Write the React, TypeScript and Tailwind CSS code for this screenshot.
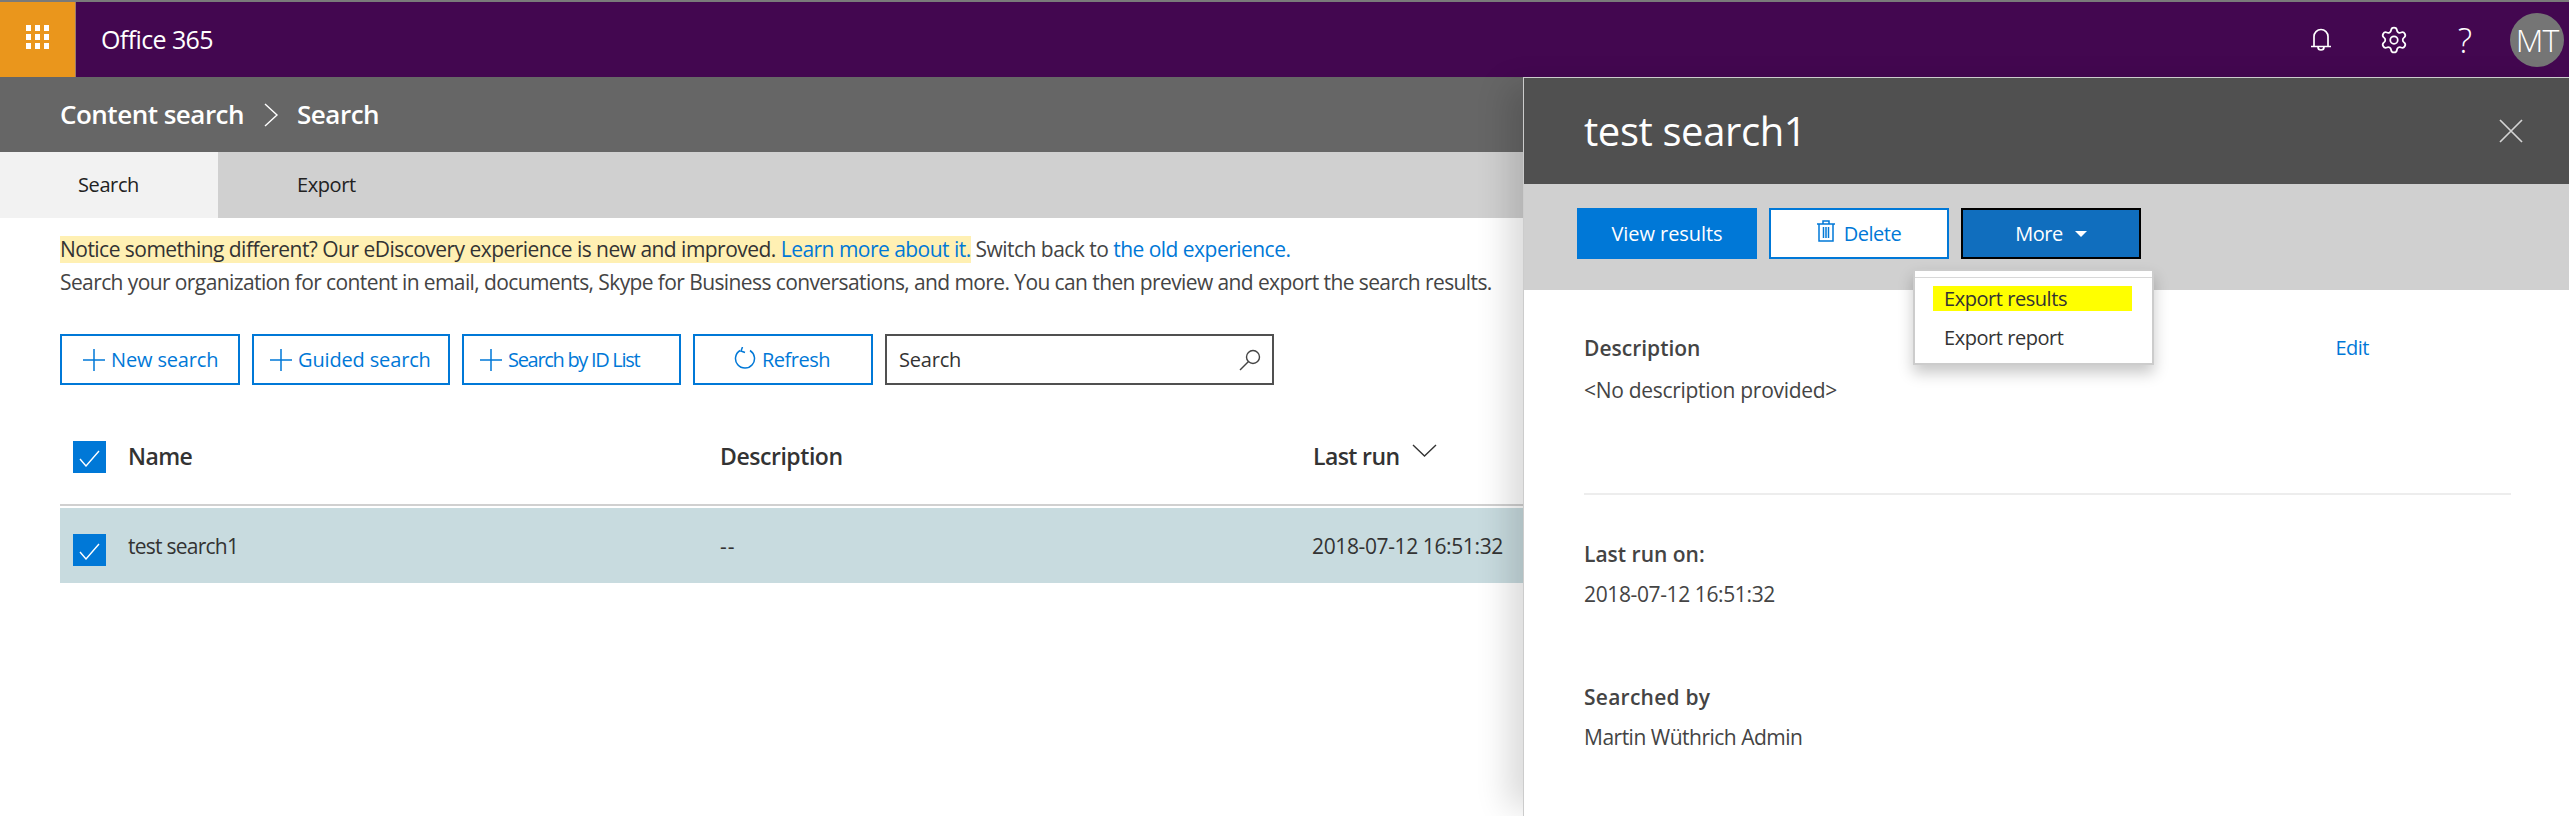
import React from 'react';
import { Settings } from 'lucide-react';

const font = "font-['Open_Sans','Noto_Sans',sans-serif]";

const Plus = () => (
  <svg width="22" height="22" viewBox="0 0 22 22" className="shrink-0">
    <path d="M11 0v22M0 11h22" stroke="#0078d7" strokeWidth="1.5" fill="none" />
  </svg>
);

const Check = () => (
  <div className="w-[33px] h-[32px] bg-[#0078d7] flex items-center justify-center shrink-0">
    <svg width="21" height="17" viewBox="0 0 21 17" className="mt-[3px]">
      <path d="M1 9l6 7L20 1" stroke="#fff" strokeWidth="1.4" fill="none" />
    </svg>
  </div>
);

const ToolButton = ({ width, icon, label, pad, text }: { width: string; icon: React.ReactNode; label: string; pad: string; text: string }) => (
  <button className={`${width} ${pad} h-[51px] border-2 border-[#0078d7] bg-white flex items-center text-[#0078d7] gap-[6px] whitespace-nowrap`}>
    {icon}
    <span className={text}>{label}</span>
  </button>
);

export default function App() {
  return (
    <div className={`${font} relative w-[2569px] h-[816px] overflow-hidden bg-white text-[#333]`}>
      <div className="h-[77px] bg-[#430750] border-t-2 border-[#7a7a7a] flex items-center text-white">
        <div className="w-[76px] h-full bg-[#ea961c] border-r border-[#9a7a70] flex items-center justify-center">
          <svg width="23" height="24" viewBox="0 0 23 24" fill="#fff" className="-mt-[5px]">
            <rect x="0" y="0" width="5" height="6" /><rect x="9" y="0" width="5" height="6" /><rect x="18" y="0" width="5" height="6" />
            <rect x="0" y="9" width="5" height="6" /><rect x="9" y="9" width="5" height="6" /><rect x="18" y="9" width="5" height="6" />
            <rect x="0" y="18" width="5" height="6" /><rect x="9" y="18" width="5" height="6" /><rect x="18" y="18" width="5" height="6" />
          </svg>
        </div>
        <div className="ml-[25px] text-[25px] tracking-[-0.6px]">Office 365</div>
        <div className="ml-auto flex items-center">
          <svg width="22" height="25" viewBox="0 0 22 25" fill="none" stroke="#fff" strokeWidth="1.7">
            <path d="M4 19V9.5a7 7 0 0 1 14 0V19M1 19.5h20M8 20a3 3 0 0 0 6 0" />
          </svg>
          <Settings size={30} strokeWidth={1.4} className="ml-[47px]" />
          <div className="ml-[45px] w-[22px] text-center text-[34px] font-light leading-none">?</div>
          <div className="ml-[34px] mr-[5px] w-[54px] h-[54px] rounded-full bg-[#757575] flex items-center justify-center text-[32px] font-light tracking-[-1px]">MT</div>
        </div>
      </div>

      <div className="h-[75px] bg-[#666666] pl-[60px] flex items-center text-white text-[26px] font-semibold tracking-[-0.5px]">
        <span>Content search</span>
        <svg width="16" height="24" viewBox="0 0 16 24" className="ml-[19px] mr-[18px]">
          <path d="M2 1l12 11L2 23" stroke="#fff" strokeWidth="1.4" fill="none" />
        </svg>
        <span>Search</span>
      </div>

      <div className="h-[66px] bg-[#d0d0d0] flex text-[20px] tracking-[-0.4px] text-[#222]">
        <div className="w-[218px] bg-[#f2f2f2] pl-[78px] flex items-center">Search</div>
        <div className="pl-[79px] flex items-center">Export</div>
      </div>

      <div className="pl-[60px] pt-[18px] w-[1523px]">
        <div className="h-[27px] leading-[27px] text-[21px] tracking-[-0.53px] text-[#444] whitespace-nowrap">
          <span className="inline-block bg-[#fff0b3]">
            <span className="text-[#333]">Notice something different? Our eDiscovery experience is new and improved. </span>
            <span className="text-[#0078d7]">Learn more about it.</span>
          </span>
          <span> Switch back to </span>
          <span className="text-[#0078d7]">the old experience.</span>
        </div>
        <div className="mt-[6px] h-[27px] leading-[27px] text-[21px] tracking-[-0.6px] text-[#444] whitespace-nowrap">
          Search your organization for content in email, documents, Skype for Business conversations, and more. You can then preview and export the search results.
        </div>

        <div className="mt-[38px] flex gap-[12px]">
          <ToolButton width="w-[180px]" pad="pl-[21px]" text="text-[20px] tracking-[-0.15px]" icon={<Plus />} label="New search" />
          <ToolButton width="w-[198px]" pad="pl-[16px]" text="text-[20px] tracking-[-0.15px]" icon={<Plus />} label="Guided search" />
          <ToolButton width="w-[219px]" pad="pl-[16px]" text="text-[20px] tracking-[-1.3px]" icon={<Plus />} label="Search by ID List" />
          <ToolButton
            width="w-[180px]"
            pad="pl-[39px]"
            text="text-[20px] tracking-[-0.5px]"
            label="Refresh"
            icon={
              <svg width="22" height="23" viewBox="0 0 22 23" fill="none" stroke="#0078d7" strokeWidth="1.5" className="shrink-0 -mt-[2px]">
                <path d="M6 3.5A9.5 9.5 0 1 0 16 3.5M8.5 0L7 4l4 1.5" />
              </svg>
            }
          />
          <div className="w-[389px] h-[51px] border-2 border-[#505050] flex items-center justify-between pl-[12px] pr-[11px] text-[20px] tracking-[-0.2px] text-[#333]">
            <span>Search</span>
            <svg width="22" height="22" viewBox="0 0 22 22" fill="none" stroke="#444" strokeWidth="1.4">
              <circle cx="14" cy="8" r="6.5" />
              <path d="M9.5 12.5L1 21" />
            </svg>
          </div>
        </div>

        <div className="mt-[23px] h-[96px] flex items-center pl-[13px] text-[23px] font-semibold tracking-[-0.6px] text-[#333]">
          <div className="mt-[2px]"><Check /></div>
          <div className="ml-[22px] w-[592px]">Name</div>
          <div className="w-[593px] tracking-[-0.45px]">Description</div>
          <div className="flex items-start">
            Last run
            <svg width="25" height="13" viewBox="0 0 25 13" className="ml-[13px] mt-[5px]">
              <path d="M1 1l11.5 11L24 1" stroke="#333" strokeWidth="1.4" fill="none" />
            </svg>
          </div>
        </div>
        <div className="h-[2px] bg-[#d0d0d0]" />
        <div className="mt-[2px] h-[75px] bg-[#c8dbdf] flex items-center pl-[13px] text-[21px] text-[#333]">
          <div className="mt-[9px]"><Check /></div>
          <div className="ml-[22px] w-[592px] mt-[3px] tracking-[-0.75px]">test search1</div>
          <div className="w-[593px] mt-[3px] tracking-[1px]">--</div>
          <div className="mt-[3px] -ml-[1px] tracking-[-0.38px] whitespace-nowrap">2018-07-12 16:51:32</div>
        </div>
      </div>

      {/* details panel slides over the page */}
      <div className="absolute left-[1523px] top-[77px] w-[1046px] h-[739px] bg-white border-l border-t border-[#cccccc] shadow-[-24px_0_30px_-8px_rgba(0,0,0,0.14)]">
        <div className="h-[106px] bg-[#505050] pl-[60px] pr-[46px] flex items-center justify-between text-white">
          <div className="text-[40px] tracking-[-0.4px]">test search1</div>
          <svg width="24" height="24" viewBox="0 0 24 24" stroke="#d4d4d4" strokeWidth="1.7">
            <path d="M1 1l22 22M23 1L1 23" />
          </svg>
        </div>
        <div className="h-[106px] bg-[#d0d0d0] pl-[53px] pt-[24px] flex gap-[12px] text-[20px] tracking-[-0.5px]">
          <button className="w-[180px] h-[51px] bg-[#0078d7] text-white tracking-[-0.05px]">View results</button>
          <button className="w-[180px] h-[51px] bg-white border-2 border-[#0078d7] text-[#0078d7] flex items-center justify-center gap-[9px]">
            <svg width="18" height="22" viewBox="0 0 18 22" fill="none" stroke="#0078d7" strokeWidth="1.5" className="-mt-[5px]">
              <path d="M0 4h18M6 4V1h6v3M2 4v17h14V4M6.5 7v11M9 7v11M11.5 7v11" />
            </svg>
            <span>Delete</span>
          </button>
          <button className="w-[180px] h-[51px] bg-[#106ebe] border-2 border-black text-white flex items-center justify-center gap-[12px]">
            <span>More</span>
            <span className="w-0 h-0 border-x-[6px] border-x-transparent border-t-[6px] border-t-white" />
          </button>
        </div>
        <div className="pl-[60px] pr-[58px] text-[21px] text-[#444]">
          <div className="pt-[43px] flex leading-[30px]">
            <span className="font-semibold">Description</span>
            <span className="ml-auto mr-[142px] text-[#0078d7] text-[20px] tracking-[-0.5px]">Edit</span>
          </div>
          <div className="mt-[12px] leading-[30px] tracking-[-0.3px]">&lt;No description provided&gt;</div>
          <div className="mt-[88px] h-[2px] bg-[#ededed]" />
          <div className="mt-[44px] leading-[30px] font-semibold">Last run on:</div>
          <div className="mt-[10px] leading-[30px] tracking-[-0.38px]">2018-07-12 16:51:32</div>
          <div className="mt-[73px] leading-[30px] font-semibold tracking-[0.25px]">Searched by</div>
          <div className="mt-[10px] leading-[30px] tracking-[-0.5px]">Martin Wüthrich Admin</div>
        </div>

        <div className="absolute left-[389px] top-[191px] w-[241px] h-[96px] bg-white border-2 border-[#cccccc] shadow-[0_8px_14px_rgba(0,0,0,0.22)] text-[20px] tracking-[-0.45px] text-[#333]">
          <div className="h-[7px] border-b border-[#d8d8d8]" />
          <div className="ml-[18px] mt-[8px] w-[199px] h-[25px] bg-[#ffff00] pl-[11px] leading-[25px]">Export results</div>
          <div className="ml-[29px] mt-[13px] leading-[27px]">Export report</div>
        </div>
      </div>
    </div>
  );
}
